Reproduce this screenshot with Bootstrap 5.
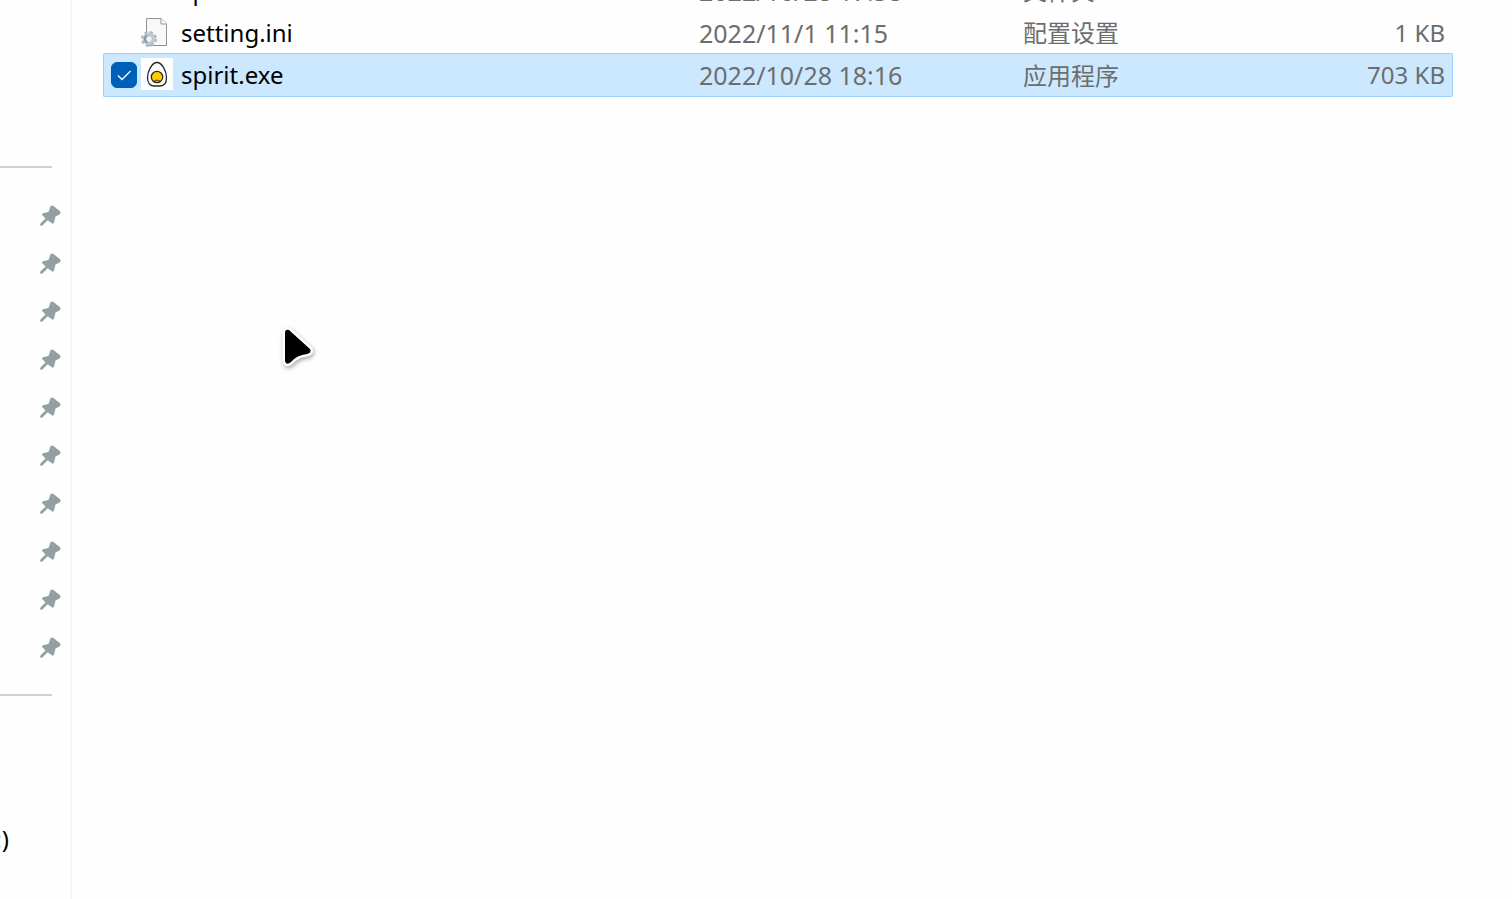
<!DOCTYPE html>
<html lang="zh-CN">
<head>
<meta charset="utf-8">
<meta name="viewport" content="width=device-width, initial-scale=1">
<title>spirit</title>
<link href="https://cdn.jsdelivr.net/npm/bootstrap@5.3.0/dist/css/bootstrap.min.css" rel="stylesheet">
<style>
body{background:#fefefe;color:#000;font-family:"Noto Sans","Noto Sans CJK SC",sans-serif;font-size:24px;line-height:32px}
.sidebar{width:72px;border-right:2px solid #f5f5f5;padding-top:166px}
.divider{width:52px;height:2px;margin:0;border:0;background:#d0d0d0;opacity:1}
.pins{padding:24px 8px 22px 0}
.pin-btn{height:48px;width:24px;color:#939fa5}
.drive{height:48px;margin-top:119px;width:9px;color:#000;text-decoration:none}
.files{margin:-31px 59px 0 31px}
.file-table{table-layout:fixed;width:100%;border-collapse:separate;border-spacing:0}
.file-table td{height:42px;padding:2px 0 0 2px;color:#6d6d6d;font-size:25px;white-space:nowrap;vertical-align:middle}
.file-table td:first-child{padding:0 0 0 1px;font-size:24px}
.file-table td.zh{font-size:24px}
.file-table td.size{padding-right:8px;font-size:24px}
.file-table .file-name{color:#000;padding-top:2px}
.file-table .picked td{height:44px;background:#cce8ff;border:solid #99d1ff;border-width:1px 0}
.file-table .picked td:first-child{padding:0 0 2px;border-left-width:1px;border-radius:2px 0 0 2px}
.file-table .picked td:not(.zh):not(:first-child){padding-top:0}
.file-table .picked td:last-child{border-right-width:1px;border-radius:0 2px 2px 0;padding-right:7px}
.pick{width:26px;height:26px;margin:2px 4px 0 7px;border-radius:5px}
.pick:checked{background-color:#005fb8;border-color:#005fb8;background-size:22px;background-image:url("data:image/svg+xml,%3Csvg xmlns='http://www.w3.org/2000/svg' viewBox='0 0 22 22'%3E%3Cpath d='M5 11.5l4 4 8.500-8.500' fill='none' stroke='white' stroke-width='1.300'/%3E%3C/svg%3E")}
.pick:not(:checked){opacity:0}
.file-icon{width:32px;height:32px;margin-right:8px}
.pointer{left:280px;top:324px}
</style>
</head>
<body>
<svg class="d-none" aria-hidden="true"><symbol id="pin" viewBox="0 0 24 24"><path d="M12.500 2.300Q14 .8 15.500 2.100L22 7.300Q23.500 9 21.600 10.400L17.500 12.500 16 18.600Q15.200 20.300 13.900 19.300L9.700 16.300 4.900 21Q3.400 22.300 2.200 21.400 1.700 20.200 2.800 19.100L7.600 14.600 4.300 11.300Q3.600 9.800 5.100 9.300L10.500 8Z" fill="currentColor"/></symbol></svg>
<div class="d-flex vh-100 overflow-hidden position-relative">
  <nav class="sidebar flex-shrink-0" aria-label="快速访问">
    <hr class="divider">
    <div class="pins d-flex flex-column align-items-end" id="pins"></div>
    <hr class="divider">
    <a class="drive d-flex align-items-center justify-content-end text-nowrap" href="#">本地磁盘 (C:)</a>
  </nav>
  <main class="files flex-grow-1">
    <table class="file-table">
      <colgroup><col><col style="width:24%"><col style="width:16%"><col style="width:16%"></colgroup>
      <tbody>
        <tr><td><div class="d-flex align-items-center"><input class="form-check-input pick" type="checkbox" id="f0"><span class="file-icon"></span><label class="file-name" for="f0">spirits</label></div></td><td>2022/10/28 17:38</td><td class="zh">文件夹</td><td></td></tr>
        <tr><td><div class="d-flex align-items-center"><input class="form-check-input pick" type="checkbox" id="f1"><svg class="file-icon" viewBox="0 0 32 32" aria-hidden="true"><path d="M5.500 2.500H20L25.500 8V29.500H5.500Z" fill="#f8f8f8" stroke="#929292"/><path d="M20 2.500V8h5.500" fill="#fff" stroke="#929292"/><circle cx="8" cy="23" r="6.500" fill="none" stroke="#a9b8c2" stroke-width="3" stroke-dasharray="3 2.100"/><circle cx="8" cy="23" r="4.500" fill="#eef2f4" stroke="#bac8d1" stroke-width="3.500"/><path d="M6 19.500a4 4 0 0 0 0 7" fill="none" stroke="#8296a5" stroke-width="2"/></svg><label class="file-name" for="f1">setting.ini</label></div></td><td>2022/11/1 11:15</td><td class="zh">配置设置</td><td class="size text-end">1 KB</td></tr>
        <tr class="picked"><td><div class="d-flex align-items-center"><input class="form-check-input pick" type="checkbox" id="f2" checked><svg class="file-icon" viewBox="0 0 32 32" aria-hidden="true"><path d="M0 0h32v32H0z" fill="#fff"/><path d="M16 4.500C11 4.500 6.500 13 6.500 19.500C6.500 25.500 9.500 28 13 28H19C22.500 28 25.500 25.500 25.500 19.500C25.500 13 21 4.500 16 4.500Z" fill="#fff" stroke="#25272c" stroke-width="1.300"/><circle cx="16" cy="19" r="5.700" fill="#fc0" stroke="#342b10" stroke-width="1.300"/><path d="M13 24Q13.300 22 14.500 22.800 16 21.200 17.500 22.800 18.700 22 19 24" fill="none" stroke="#342b10" stroke-width="1"/></svg><label class="file-name" for="f2">spirit.exe</label></div></td><td>2022/10/28 18:16</td><td class="zh">应用程序</td><td class="size text-end">703 KB</td></tr>
      </tbody>
    </table>
  </main>
  <svg class="pointer position-absolute" width="40" height="48" viewBox="0 0 40 48" aria-hidden="true" style="filter:drop-shadow(1px 2px 2px #0005)"><path d="M5 9Q5 5 9 6L30 25Q32 29 27 30Q17 31 11 38Q6 42 5 37Z" fill="#000" stroke="#fff" stroke-width="5" stroke-linejoin="round" paint-order="stroke"/></svg>
</div>
<script>
const pins = document.getElementById('pins');
for (let i = 0; i < 10; i++) {
  pins.insertAdjacentHTML('beforeend', '<button type="button" class="pin-btn btn p-0 border-0 d-flex align-items-center" aria-label="取消固定"><svg width="24" height="24"><use href="#pin"/></svg></button>');
}
</script>
<script src="https://cdn.jsdelivr.net/npm/bootstrap@5.3.0/dist/js/bootstrap.bundle.min.js"></script>
</body>
</html>
